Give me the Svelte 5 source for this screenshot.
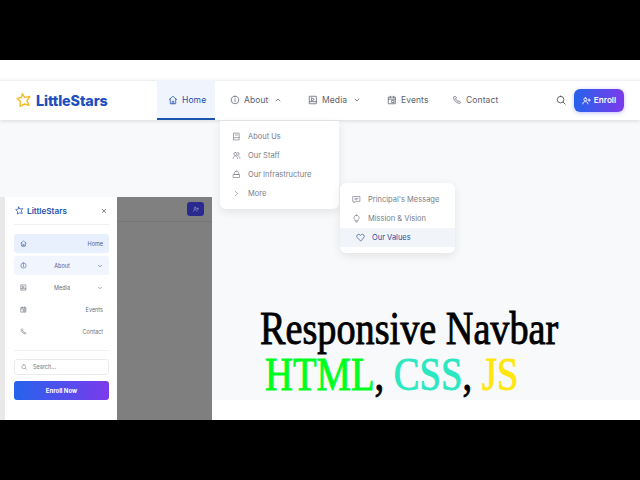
<script>
  const paths = {
    home: 'M3 11 12 3l9 8M5.500 9.500V21h13V9.500M10 21v-6h4v6',
    info: 'M12 3a9 9 0 1 0 0 18 9 9 0 0 0 0-18zM12 11v5M12 7.500v.5',
    media: 'M4 3h16v18H4zM4 16h16M9 7l6 3.500L9 14z',
    cal: 'M4 5h16v16H4zM4 10h16M8 3v4M16 3v4M12 13h5v5h-5z',
    phone: 'M6 3 4 5c0 8 7 15 15 15l2-2-4-4-2.500 1.500C12.500 14.500 9.500 11.500 8.500 9.500L10 7z',
    book: 'M5 3h14v18H5zM5 15h14M9 8h6',
    staff: 'M9 4a4 4 0 1 0 0 8 4 4 0 0 0 0-8zM3 20c0-4 3-7 6-7s6 3 6 7M15 4a4 4 0 0 1 0 8M18 14c2 1 3 3 3 6',
    build: 'M12 3a6 6 0 0 0-6 6v3h12V9a6 6 0 0 0-6-6zM4 12h16v8H4z',
    msg: 'M3 4h18v13H10l-5 4v-4H3zM8 9h8M8 12.500h5',
    bulb: 'M12 3a7 7 0 0 0-4 12.700V18h8v-2.300A7 7 0 0 0 12 3zM9.500 21h5',
    heart: 'M12 21 3.500 12.500a5.200 5.200 0 0 1 7.400-7.400L12 6.200l1.100-1.100a5.200 5.200 0 0 1 7.400 7.400z',
    search: 'M11 3a8 8 0 1 0 0 16 8 8 0 0 0 0-16zM17 17l5 5',
    user: 'M9 5a4 4 0 1 0 0 8 4 4 0 0 0 0-8zM2 21c0-4 3-6 7-6s7 2 7 6M19 8v6M16 11h6',
    down: 'M6 9l6 6 6-6',
    up: 'M6 15l6-6 6 6',
    right: 'M9 6l6 6-6 6',
    close: 'M5 5l14 14M19 5 5 19',
    star: 'M9.500 2.500l3.300 5.600 7.900-1.300-4.200 6.200 3 6.800-6.800-1.800-6.400 3.500.3-7.200L1.800 9.600l6.300-1.300z'
  };
  const links = [
    { label: 'Home', icon: 'home', cls: 'active' },
    { label: 'About', icon: 'info', chev: 'up', cls: 'about' },
    { label: 'Media', icon: 'media', chev: 'down', cls: 'media' },
    { label: 'Events', icon: 'cal', cls: 'events' },
    { label: 'Contact', icon: 'phone', cls: 'contact' }
  ];
  const aboutItems = [
    { label: 'About Us', icon: 'book' },
    { label: 'Our Staff', icon: 'staff' },
    { label: 'Our Infrastructure', icon: 'build' },
    { label: 'More', icon: 'right' }
  ];
  const moreItems = [
    { label: "Principal's Message", icon: 'msg' },
    { label: 'Mission & Vision', icon: 'bulb' },
    { label: 'Our Values', icon: 'heart', on: true }
  ];
  const drawerItems = [
    { label: 'Home', icon: 'home', cls: 'd-home' },
    { label: 'About', icon: 'info', chev: true, cls: 'd-about' },
    { label: 'Media', icon: 'media', chev: true, cls: 'd-media' },
    { label: 'Events', icon: 'cal', cls: 'd-plain' },
    { label: 'Contact', icon: 'phone', cls: 'd-plain' }
  ];
</script>

{#snippet icon(name, size, sw = 1.8)}
  <svg class="ic" width={size} height={size} viewBox="0 0 24 24" fill="none" stroke="currentColor" stroke-width={sw} stroke-linecap="round" stroke-linejoin="round"><path d={paths[name]} /></svg>
{/snippet}

<div class="screen">
  <div class="stage">
    <div class="strip"></div>
    <header class="nav">
      <div class="brand">
        <span class="star">{@render icon('star', 16, 2.2)}</span>
        <span class="brand-text">LittleStars</span>
      </div>
      <nav class="links">
        {#each links as l}
          <div class="link {l.cls ?? ''}">
            {@render icon(l.icon, 10)}
            <span>{l.label}</span>
            {#if l.chev}<span class="chev">{@render icon(l.chev, 8, 2.2)}</span>{/if}
          </div>
        {/each}
      </nav>
      <div class="actions">
        <span class="search">{@render icon('search', 10, 2)}</span>
        <div class="enroll">{@render icon('user', 9, 2.4)}<span>Enroll</span></div>
      </div>
    </header>
    <main class="body">
      <div class="title">
        <div class="t1">Responsive Navbar</div>
        <div class="t2"><span class="g">HTML</span>, <span class="c">CSS</span>, <span class="y">JS</span></div>
      </div>
    </main>
    <div class="foot"></div>

    <div class="menu menu-about">
      {#each aboutItems as it}
        <div class="mi">{@render icon(it.icon, 9)}<span>{it.label}</span></div>
      {/each}
    </div>
    <div class="menu menu-more">
      {#each moreItems as it}
        <div class="mi" class:on={it.on}>{@render icon(it.icon, 9)}<span>{it.label}</span></div>
      {/each}
    </div>

    <div class="phone">
      <aside class="drawer">
        <div class="d-head">
          <span class="d-star">{@render icon('star', 9, 2)}</span>
          <span class="d-brand">LittleStars</span>
          <span class="d-close">{@render icon('close', 6, 2.6)}</span>
        </div>
        <div class="d-list">
          {#each drawerItems as d}
            <div class="d-item {d.cls}">
              {@render icon(d.icon, 7, 2)}
              <span class="d-label">{d.label}</span>
              {#if d.chev}{@render icon('down', 6, 2.4)}{/if}
            </div>
          {/each}
        </div>
        <div class="d-search">{@render icon('search', 6, 2)}<span>Search...</span></div>
        <div class="d-btn">Enroll Now</div>
      </aside>
      <div class="overlay">
        <div class="o-head"><div class="o-btn">{@render icon('user', 6, 2.4)}</div></div>
      </div>
    </div>
  </div>
</div>

<style>
  :global(body) { margin: 0; background: #000; }
  .screen { width: 640px; height: 480px; background: #000; padding: 60px 0; box-sizing: border-box; overflow: hidden; font-family: Inter, "Open Sans", sans-serif; }
  .stage { position: relative; width: 640px; height: 360px; display: flex; flex-direction: column; background: #fff; overflow: hidden; }
  .strip { height: 21px; background: #fff; border-bottom: 1px solid #eef0f3; box-sizing: border-box; margin-bottom: -1px; }
  .ic { display: block; flex: none; }

  .nav { height: 40px; flex: none; display: flex; align-items: stretch; background: transparent; box-shadow: 0 1px 4px rgba(0,0,0,.13); position: relative; z-index: 1; }
  .brand { width: 157px; flex: none; display: flex; align-items: center; padding-left: 16px; gap: 4px; box-sizing: border-box; }
  .star { color: #f5bd2e; }
  .brand-text { font-family: Inter, sans-serif; font-weight: 800; font-size: 14.300px; letter-spacing: -0.1px; color: #1d4fc0; }
  .links { display: flex; align-items: stretch; }
  .link { display: flex; align-items: center; gap: 4px; font-size: 8.500px; font-weight: 400; color: #5b616d; box-sizing: border-box; letter-spacing: 0.1px; }
  .link .chev { margin-left: 2px; }
  .link.active { width: 58px; padding-left: 11px; background: #f0f5fd; color: #1f4fa8; box-shadow: inset 0 -2px 0 #1a56ad; }
  .link.about { width: 93px; padding-left: 15px; }
  .link.media { width: 79px; }
  .link.events { width: 65px; }
  .link.contact { width: 60px; }
  .actions { margin-left: auto; display: flex; align-items: center; gap: 8px; padding-right: 16px; }
  .search { color: #444b57; }
  .enroll { width: 50px; height: 23px; border-radius: 6px; background: linear-gradient(90deg, #2563eb, #7c3aed); color: #fff; display: flex; align-items: center; justify-content: center; gap: 3px; font-size: 8.200px; font-weight: 600; box-shadow: 0 1px 4px rgba(79,70,229,.35); }

  .body { flex: 1; background: #f8f9fb; display: flex; flex-direction: column; align-items: flex-start; justify-content: flex-end; padding: 0 0 2px 260px; box-sizing: border-box; }
  .foot { height: 20px; background: #fff; flex: none; }

  .title { font-family: "Liberation Serif", serif; font-weight: 400; color: #000; line-height: 1; transform: scaleX(.84); transform-origin: left bottom; -webkit-text-stroke: 0.9px currentColor; }
  .t1 { font-size: 45.500px; line-height: 46px; white-space: nowrap; }
  .t2 { font-size: 46px; line-height: 46px; padding-left: 6px; white-space: nowrap; }
  .g { color: #00ff1f; }
  .c { color: #2ce8c2; }
  .y { color: #ffe60c; }

  .menu { position: absolute; background: #fff; border-radius: 6px; box-shadow: 0 3px 10px rgba(0,0,0,.09); box-sizing: border-box; z-index: 2; }
  .menu-about { left: 220px; top: 61px; width: 119px; height: 88px; padding: 6px 0; border-top-left-radius: 0; border-top-right-radius: 0; }
  .menu-more { left: 340px; top: 123px; width: 115px; height: 70px; padding: 7px 0; }
  .mi { height: 19px; display: flex; align-items: center; gap: 7px; padding-left: 12px; font-size: 7.500px; color: #787e89; white-space: nowrap; }
  .mi.on { background: #f1f4f8; color: #2c4f9e; padding-left: 16px; }

  .phone { position: absolute; left: 0; top: 137px; width: 212px; height: 223px; display: flex; background: #e9e9e9; padding-left: 5px; box-sizing: border-box; z-index: 1; }
  .drawer { width: 112px; flex: none; background: #fff; display: flex; flex-direction: column; padding: 0 8px 0 9px; box-sizing: border-box; }
  .d-head { height: 27px; flex: none; display: flex; align-items: center; gap: 3px; padding-left: 1px; border-bottom: 1px solid #eef0f4; }
  .d-star { color: #2f55b5; }
  .d-brand { font-size: 8.200px; font-weight: 600; color: #2853ad; }
  .d-close { margin-left: auto; margin-right: 2px; color: #555; }
  .d-list { display: flex; flex-direction: column; gap: 3px; padding: 9px 0; border-bottom: 1px solid #eef0f4; height: 126px; flex: none; box-sizing: border-box; }
  .d-item { height: 19px; flex: none; display: flex; align-items: center; padding: 0 6px; font-size: 5.500px; color: #6b717c; border-radius: 3px; }
  .d-label { flex: 1; }
  .d-home .d-label, .d-plain .d-label { text-align: right; }
  .d-media .d-label, .d-about .d-label { text-align: center; }
  .d-home { background: #e8f0fe; color: #3e5fa8; }
  .d-about { background: #f1f5fe; color: #3e5fa8; }
  .d-search { margin-top: 8px; height: 16px; flex: none; border: 1px solid #e9ebef; border-radius: 3px; box-sizing: border-box; display: flex; align-items: center; gap: 6px; padding-left: 6px; font-size: 5.500px; color: #777; }
  .d-btn { margin-top: 6px; height: 19px; flex: none; border-radius: 3px; background: linear-gradient(90deg, #2563eb, #7c3aed); color: #fff; font-size: 6px; font-weight: 700; display: flex; align-items: center; justify-content: center; }
  .overlay { flex: 1; background: #7f7f7f; }
  .o-head { height: 25px; box-sizing: border-box; background: #808080; border-bottom: 1px solid #777; display: flex; align-items: center; justify-content: flex-end; padding-right: 8px; }
  .o-btn { width: 17px; height: 14px; border-radius: 3px; background: #2a2a8e; color: #9a9ad0; display: flex; align-items: center; justify-content: center; }
</style>
